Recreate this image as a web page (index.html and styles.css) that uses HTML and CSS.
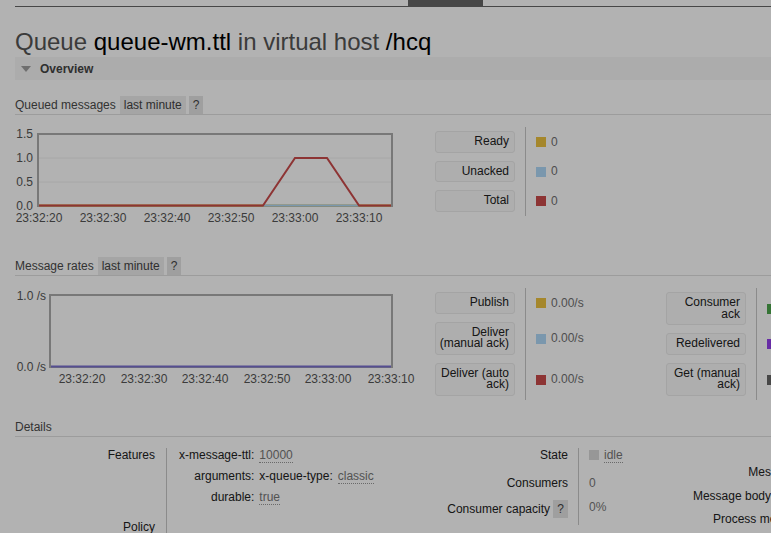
FILE: index.html
```html
<!DOCTYPE html>
<html>
<head>
<meta charset="utf-8">
<link rel="stylesheet" href="styles.css">
</head>
<body>
<div class="topnav"><div class="tab"></div></div>
<div class="page">
  <h1>Queue <b>queue-wm.ttl</b> in virtual host <b>/hcq</b></h1>
  <div class="section-bar"><span class="tri"></span>Overview</div>

  <div class="section">
    <h3 class="hdr"><span class="hdr-title">Queued messages</span><span class="pill">last minute</span><span class="help">?</span></h3>
    <div class="chart-row">
      <svg class="chart" width="400" height="115" viewBox="0 0 400 115">
        <line class="grid" x1="23" y1="33" x2="377" y2="33"/>
        <line class="grid" x1="23" y1="57" x2="377" y2="57"/>
        <rect class="frame" x="23" y="9" width="354" height="72"/>
        <polyline class="series" points="24,80.5 376,80.5" stroke="#edc240"/>
        <polyline class="series" points="248,80.5 344,80.5" stroke="#afd8f8"/>
        <polyline class="series" points="24,80.5 248,80.5 280,33 312,33 344,80.5 376,80.5" stroke="#cb4b4b"/>
        <text class="tick" x="18" y="13" text-anchor="end">1.5</text>
        <text class="tick" x="18" y="37" text-anchor="end">1.0</text>
        <text class="tick" x="18" y="61" text-anchor="end">0.5</text>
        <text class="tick" x="18" y="85" text-anchor="end">0.0</text>
        <text class="tick" x="24" y="97" text-anchor="middle">23:32:20</text>
        <text class="tick" x="88" y="97" text-anchor="middle">23:32:30</text>
        <text class="tick" x="152" y="97" text-anchor="middle">23:32:40</text>
        <text class="tick" x="216" y="97" text-anchor="middle">23:32:50</text>
        <text class="tick" x="280" y="97" text-anchor="middle">23:33:00</text>
        <text class="tick" x="344" y="97" text-anchor="middle">23:33:10</text>
      </svg>
      <div class="legend">
        <div class="lgroup">
          <div class="lk"><span class="lbox">Ready</span></div>
          <div class="lv"><i class="sw yellow"></i>0</div>
          <div class="lk"><span class="lbox">Unacked</span></div>
          <div class="lv"><i class="sw blue"></i>0</div>
          <div class="lk"><span class="lbox">Total</span></div>
          <div class="lv"><i class="sw red"></i>0</div>
        </div>
      </div>
    </div>
  </div>

  <div class="section">
    <h3 class="hdr"><span class="hdr-title">Message rates</span><span class="pill">last minute</span><span class="help">?</span></h3>
    <div class="chart-row">
      <svg class="chart" width="400" height="115" viewBox="0 0 400 115">
        <rect class="frame" x="35" y="9" width="342" height="72"/>
        <polyline class="series" points="36,80.5 376,80.5" stroke="#7a70d0"/>
        <text class="tick" x="31" y="14" text-anchor="end">1.0 /s</text>
        <text class="tick" x="31" y="85" text-anchor="end">0.0 /s</text>
        <text class="tick" x="67" y="97" text-anchor="middle">23:32:20</text>
        <text class="tick" x="129" y="97" text-anchor="middle">23:32:30</text>
        <text class="tick" x="190" y="97" text-anchor="middle">23:32:40</text>
        <text class="tick" x="252" y="97" text-anchor="middle">23:32:50</text>
        <text class="tick" x="313" y="97" text-anchor="middle">23:33:00</text>
        <text class="tick" x="376" y="97" text-anchor="middle">23:33:10</text>
      </svg>
      <div class="legend">
        <div class="lgroup">
          <div class="lk"><span class="lbox">Publish</span></div>
          <div class="lv"><i class="sw yellow"></i>0.00/s</div>
          <div class="lk"><span class="lbox">Deliver (manual ack)</span></div>
          <div class="lv"><i class="sw blue"></i>0.00/s</div>
          <div class="lk"><span class="lbox">Deliver (auto ack)</span></div>
          <div class="lv"><i class="sw red"></i>0.00/s</div>
        </div>
        <div class="lgroup">
          <div class="lk"><span class="lbox">Consumer ack</span></div>
          <div class="lv"><i class="sw green"></i>0.00/s</div>
          <div class="lk"><span class="lbox">Redelivered</span></div>
          <div class="lv"><i class="sw purple"></i>0.00/s</div>
          <div class="lk"><span class="lbox">Get (manual ack)</span></div>
          <div class="lv"><i class="sw grey"></i>0.00/s</div>
        </div>
      </div>
    </div>
  </div>

  <div class="section">
    <h3 class="hdr"><span class="hdr-title">Details</span></h3>
    <div class="details">
      <div class="facts f1">
        <div class="fth">Features</div>
        <div class="ftd feat">
          <div class="kv">
            <span class="k">x-message-ttl:</span><span class="v"><span class="abbr">10000</span></span>
            <span class="k">arguments:</span><span class="v"><span class="k2">x-queue-type:</span><span class="abbr">classic</span></span>
            <span class="k">durable:</span><span class="v"><span class="abbr">true</span></span>
          </div>
        </div>
        <div class="fth">Policy</div>
        <div class="ftd"></div>
      </div>
      <div class="facts f2">
        <div class="fth">State</div>
        <div class="ftd"><span class="state-sq"></span><span class="abbr">idle</span></div>
        <div class="fth">Consumers</div>
        <div class="ftd val">0</div>
        <div class="fth">Consumer capacity <span class="help">?</span></div>
        <div class="ftd val">0%</div>
      </div>
      <div class="facts f3">
        <div class="fth">Messages</div>
        <div class="fth">Message body bytes</div>
        <div class="fth">Process memory</div>
      </div>
    </div>
  </div>
</div>
<div class="backdrop"></div>
</body>
</html>
```

FILE: styles.css
```css
html, body {
  margin: 0;
  overflow: hidden;
  background: #fff;
}
body {
  font-family: "Liberation Sans", Arial, sans-serif;
  font-size: 12px;
  color: #484848;
  width: 771px;
  height: 533px;
}
.topnav {
  height: 6px;
  border-bottom: 1px solid #666;
  margin-left: 15px;
  padding-left: 393px;
  width: 1100px;
}
.tab {
  width: 75px;
  height: 7px;
  background: #666;
}
.page {
  padding: 0 15px;
  width: 1100px;
}
h1 {
  margin: 21px 0 0;
  font-size: 24px;
  line-height: 28px;
  font-weight: normal;
  color: #555;
}
h1 b {
  font-weight: normal;
  color: #000;
}
.section-bar {
  margin-top: 1px;
  height: 23px;
  display: flex;
  align-items: center;
  padding-left: 6px;
  background: #f6f6f6;
  font-weight: bold;
  color: #444;
}
.tri {
  width: 0;
  height: 0;
  border-left: 5px solid transparent;
  border-right: 5px solid transparent;
  border-top: 6px solid #a0a0a0;
  margin-right: 9px;
  margin-top: 1px;
}
.section {
  margin-top: 16px;
}
.section + .section {
  margin-top: 17px;
}
.hdr {
  margin: 0;
  display: flex;
  height: 18px;
  line-height: 19px;
  font-size: 12px;
  font-weight: normal;
  color: #4a4a4a;
  border-bottom: 1px solid #e0e0e0;
}
.hdr-title {
  margin-right: 4px;
}
.pill {
  padding: 0 4px;
  background: #ececec;
  margin-right: 3px;
  color: #444;
}
.help {
  display: inline-block;
  padding: 0 4px;
  background: #e4e4e4;
  color: #444;
}
.chart-row {
  margin-top: 10px;
  display: flex;
  align-items: flex-start;
  height: 115px;
}
.chart {
  flex-shrink: 0;
  margin-right: 20px;
  font-family: "Liberation Sans", Arial, sans-serif;
}
.grid {
  stroke: #f0f0f0;
  stroke-width: 1;
}
.frame {
  fill: none;
  stroke: #adadad;
  stroke-width: 2;
}
.series {
  fill: none;
  stroke-width: 2;
}
.tick {
  font-size: 12px;
  fill: #555;
}
.legend {
  display: flex;
  margin-top: 2px;
  flex-shrink: 0;
}
.lgroup {
  display: grid;
  grid-template-columns: 90px 141px;
}
.lk {
  padding: 4px 10px 4px 0;
  display: flex;
}
.lbox {
  width: 80px;
  box-sizing: border-box;
  text-align: right;
  padding: 4px 5px 4px 2px;
  line-height: 11.5px;
  border: 1px solid #ebebeb;
  border-radius: 3px;
  background: #f9f9f9;
  color: #222;
}
.lv {
  border-left: 1px solid #c8c8c8;
  padding: 4px 0 4px 10px;
  display: flex;
  align-items: center;
  color: #707070;
}
.sw {
  display: inline-block;
  width: 10px;
  height: 10px;
  margin-right: 5px;
  margin-top: 1px;
}
.yellow { background: #edc240; }
.blue { background: #afd8f8; }
.red { background: #cb4b4b; }
.green { background: #4da74d; }
.purple { background: #9440ed; }
.grey { background: #666; }

.details {
  margin-top: 11px;
  display: flex;
  align-items: flex-start;
  line-height: 14px;
}
.facts {
  display: grid;
  flex-shrink: 0;
}
.fth {
  text-align: right;
  color: #222;
  box-sizing: border-box;
}
.ftd {
  border-left: 1px solid #c8c8c8;
  color: #777;
}
.f1 {
  width: 410px;
  grid-template-columns: 151px 259px;
}
.f1 .fth {
  padding-right: 11px;
}
.f1 .ftd {
  padding-left: 12px;
}
.f1 .feat {
  padding-bottom: 16px;
}
.kv {
  display: grid;
  grid-template-columns: auto auto;
  justify-content: start;
  column-gap: 5px;
  row-gap: 7px;
}
.k {
  text-align: right;
  color: #222;
}
.k2 {
  color: #222;
  margin-right: 5px;
}
.abbr {
  color: #777;
  border-bottom: 1px dotted #999;
}
.f2 {
  width: 244px;
  grid-template-columns: 153px 91px;
  grid-template-rows: 28px 24px 25px;
}
.f2 .fth {
  padding-right: 10px;
}
.f2 .ftd {
  padding-left: 10px;
}
.f2 .help {
  line-height: 14px;
  padding: 2px 4px;
}
.state-sq {
  display: inline-block;
  width: 10px;
  height: 10px;
  background: #d8d8d8;
  margin-right: 5px;
  vertical-align: -1px;
}
.f3 {
  width: 134px;
  padding-top: 17px;
  row-gap: 9.5px;
}
.backdrop {
  position: fixed;
  inset: 0;
  background: rgba(0, 0, 0, 0.3);
}
```
